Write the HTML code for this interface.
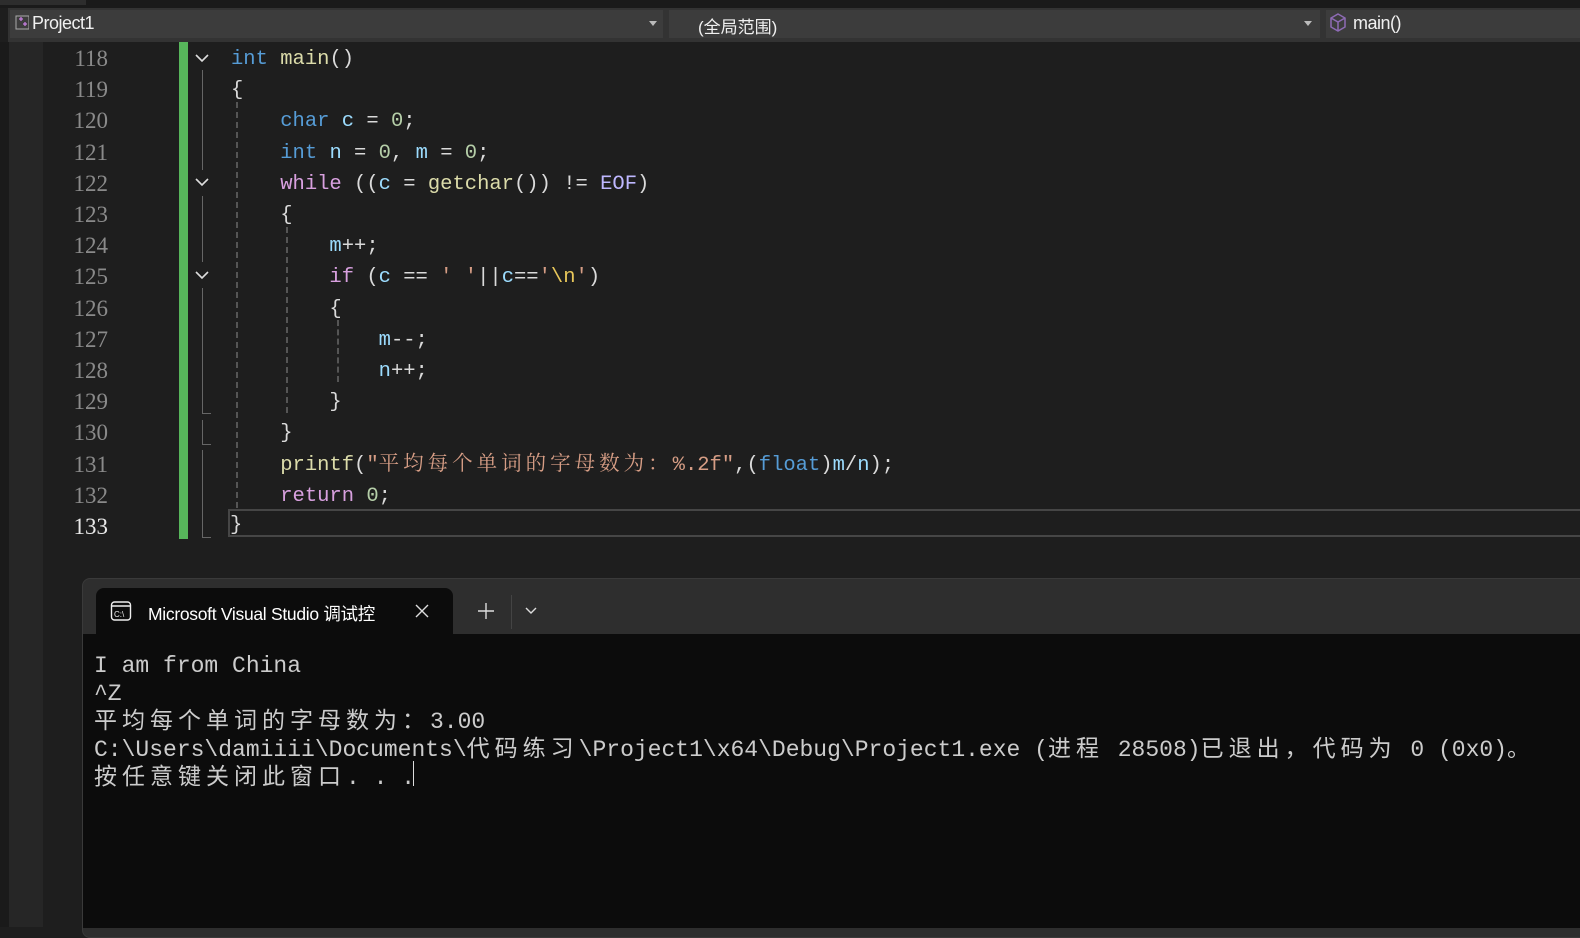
<!DOCTYPE html>
<html><head><meta charset="utf-8"><style>
*{margin:0;padding:0;box-sizing:border-box}
body{width:1580px;height:927px;background:#1e1e1e;position:relative;overflow:hidden;font-family:"Liberation Sans","Noto Sans CJK SC",sans-serif}
.abs{position:absolute}
.code{position:absolute;left:0;top:2px;font-family:"Liberation Mono","Noto Serif CJK SC",monospace;font-size:20.5px;white-space:pre;color:#dadada}
.ln{position:absolute;left:44px;width:64px;text-align:right;font-family:"Liberation Serif","Noto Serif CJK SC",serif;font-size:23px;color:#8a8a8a;height:31.2px;line-height:31.2px}
.row{position:absolute;left:231px;height:31.2px;line-height:31.2px}
.kw{color:#569cd6}.fn{color:#dcdcaa}.vr{color:#9cdcfe}.nm{color:#b5cea8}.ct{color:#d8a0df}.st{color:#d69d85}.es{color:#e8c75a}
.cj{letter-spacing:4px}
.term{font-family:"Liberation Mono","Noto Sans CJK SC",monospace;font-size:23px;color:#cccccc;white-space:pre;line-height:28px}
.tc{letter-spacing:5px}
.chev{position:absolute;left:194px;width:16px;height:16px}
.dash{position:absolute;width:0;border-left:2px dashed #555}
</style></head><body>
<div class="abs" style="left:0;top:0;width:1580px;height:8px;background:#1a1a1a"></div>
<div class="abs" style="left:0;top:0;width:86px;height:5px;background:#2d2d2d"></div>
<div class="abs" style="left:8px;top:8px;width:1572px;height:34px;background:#333"></div>
<div class="abs" style="left:10px;top:10px;width:653px;height:28px;background:#3c3c3c"></div>
<div class="abs" style="left:669px;top:10px;width:651px;height:28px;background:#3c3c3c"></div>
<div class="abs" style="left:1326px;top:10px;width:254px;height:28px;background:#3c3c3c"></div>
<svg class="abs" style="left:15px;top:13px" width="14" height="20"><rect x="1" y="3" width="13" height="13" fill="none" stroke="#aaa"/><path d="M4 6h4M6 4v4M8 11h4M10 9v4" stroke="#c57ee0" stroke-width="1.3"/></svg>
<div class="abs" style="left:32px;top:13px;font-size:18px;color:#f0f0f0;letter-spacing:-0.5px">Project1</div>
<div class="abs" style="left:649px;top:21px;border:4px solid transparent;border-top:5px solid #bbb"></div>
<div class="abs" style="left:698px;top:13px;font-size:17px;color:#f0f0f0">(全局范围)</div>
<div class="abs" style="left:1304px;top:21px;border:4px solid transparent;border-top:5px solid #bbb"></div>
<svg class="abs" style="left:1329px;top:12px" width="20" height="24"><path d="M9 2l7 4v9l-7 4-7-4V6z M2 6l7 4 7-4 M9 10v9" fill="none" stroke="#8e6bb5" stroke-width="1.5"/></svg>
<div class="abs" style="left:1353px;top:13px;font-size:18px;color:#f0f0f0;letter-spacing:-0.5px">main()</div>
<div class="abs" style="left:0;top:42px;width:9px;height:885px;background:#1a1a1a"></div>
<div class="abs" style="left:9px;top:42px;width:34px;height:885px;background:#262626"></div>
<div class="abs" style="left:179px;top:42px;width:9px;height:497px;background:#57b65b"></div>
<div class="abs" style="left:202px;top:70px;width:1px;height:100px;background:#666"></div>
<div class="abs" style="left:202px;top:196px;width:1px;height:66px;background:#666"></div>
<div class="abs" style="left:202px;top:288px;width:1px;height:126px;background:#666"></div>
<div class="abs" style="left:202px;top:413px;width:9px;height:1px;background:#666"></div>
<div class="abs" style="left:202px;top:420px;width:1px;height:24px;background:#666"></div>
<div class="abs" style="left:202px;top:444px;width:9px;height:1px;background:#666"></div>
<div class="abs" style="left:202px;top:450px;width:1px;height:87px;background:#666"></div>
<div class="abs" style="left:202px;top:537px;width:9px;height:1px;background:#666"></div>
<svg class="chev" style="top:50px" viewBox="0 0 16 16"><path d="M2 5l6 6 6-6" fill="none" stroke="#ddd" stroke-width="1.6"/></svg>
<svg class="chev" style="top:174px" viewBox="0 0 16 16"><path d="M2 5l6 6 6-6" fill="none" stroke="#ddd" stroke-width="1.6"/></svg>
<svg class="chev" style="top:267px" viewBox="0 0 16 16"><path d="M2 5l6 6 6-6" fill="none" stroke="#ddd" stroke-width="1.6"/></svg>
<div class="dash" style="left:236px;top:102px;height:406px"></div>
<div class="dash" style="left:286px;top:227px;height:186px"></div>
<div class="dash" style="left:337px;top:320px;height:62px"></div>
<div class="abs" style="left:228px;top:509px;width:1352px;height:28px;border:2px solid #464646;border-right:none"></div>
<div class="ln" style="top:43px">118</div><div class="ln" style="top:74.2px">119</div><div class="ln" style="top:105.4px">120</div><div class="ln" style="top:136.6px">121</div><div class="ln" style="top:167.8px">122</div><div class="ln" style="top:199px">123</div><div class="ln" style="top:230.2px">124</div><div class="ln" style="top:261.4px">125</div><div class="ln" style="top:292.6px">126</div><div class="ln" style="top:323.8px">127</div><div class="ln" style="top:355px">128</div><div class="ln" style="top:386.2px">129</div><div class="ln" style="top:417.4px">130</div><div class="ln" style="top:448.6px">131</div><div class="ln" style="top:479.8px">132</div><div class="ln" style="top:511px;color:#e8e8e8">133</div>
<div class="code">
<div class="row" style="top:42px"><span class="kw">int</span> <span class="fn">main</span>()</div>
<div class="row" style="top:73.2px">{</div>
<div class="row" style="top:104.4px">    <span class="kw">char</span> <span class="vr">c</span> = <span class="nm">0</span>;</div>
<div class="row" style="top:135.6px">    <span class="kw">int</span> <span class="vr">n</span> = <span class="nm">0</span>, <span class="vr">m</span> = <span class="nm">0</span>;</div>
<div class="row" style="top:166.8px">    <span class="ct">while</span> ((<span class="vr">c</span> = <span class="fn">getchar</span>()) != <span style="color:#beb7ff">EOF</span>)</div>
<div class="row" style="top:198px">    {</div>
<div class="row" style="top:229.2px">        <span class="vr">m</span>++;</div>
<div class="row" style="top:260.4px">        <span class="ct">if</span> (<span class="vr">c</span> == <span class="st">' '</span>||<span class="vr">c</span>==<span class="st">'<span class="es">\n</span>'</span>)</div>
<div class="row" style="top:291.6px">        {</div>
<div class="row" style="top:322.8px">            <span class="vr">m</span>--;</div>
<div class="row" style="top:354px">            <span class="vr">n</span>++;</div>
<div class="row" style="top:385.2px">        }</div>
<div class="row" style="top:416.4px">    }</div>
<div class="row" style="top:447.6px">    <span class="fn">printf</span>(<span class="st">"<span class="cj">平均每个单词的字母数为：</span>%.2f"</span>,(<span class="kw">float</span>)<span class="vr">m</span>/<span class="vr">n</span>);</div>
<div class="row" style="top:478.8px">    <span class="ct">return</span> <span class="nm">0</span>;</div>
<div class="row" style="top:508px;left:230px">}</div>
</div>
<div class="abs" style="left:82px;top:578px;width:1510px;height:360px;background:#2e2e2e;border:1px solid #3a3a3a;border-radius:8px"></div>
<div class="abs" style="left:83px;top:634px;width:1497px;height:294px;background:#0c0c0c"></div>
<div class="abs" style="left:96px;top:588px;width:357px;height:50px;background:#0c0c0c;border-radius:8px 8px 0 0"></div>
<svg class="abs" style="left:110px;top:600px" width="22" height="22"><rect x="1.5" y="2" width="19" height="18" rx="3" fill="none" stroke="#eee" stroke-width="1.4"/><line x1="2" y1="6" x2="20" y2="6" stroke="#eee" stroke-width="1.4"/><text x="4" y="17" font-size="8" fill="#eee" font-family="Liberation Sans">C:\</text></svg>
<div class="abs" style="left:148px;top:601px;font-size:17.5px;color:#fff;white-space:nowrap;letter-spacing:-0.3px">Microsoft Visual Studio 调试控</div>
<svg class="abs" style="left:414px;top:603px" width="16" height="16"><path d="M2 2l12 12M14 2L2 14" stroke="#ddd" stroke-width="1.4"/></svg>
<svg class="abs" style="left:477px;top:602px" width="18" height="18"><path d="M9 1v16M1 9h16" stroke="#ddd" stroke-width="1.4"/></svg>
<div class="abs" style="left:511px;top:595px;width:1px;height:34px;background:#444"></div>
<svg class="abs" style="left:524px;top:605px" width="14" height="12"><path d="M2 3l5 5 5-5" fill="none" stroke="#ddd" stroke-width="1.4"/></svg>
<div class="abs term" style="left:94px;top:652px">I am from China
^Z
<span class="tc">平均每个单词的字母数为：</span>3.00
C:\Users\damiiii\Documents\<span class="tc">代码练习</span>\Project1\x64\Debug\Project1.exe (<span class="tc">进程</span> 28508)<span class="tc">已退出，代码为</span> 0 (0x0)<span class="tc">。</span>
<span class="tc">按任意键关闭此窗口</span>. . .</div>
<div class="abs" style="left:413px;top:761px;width:1px;height:25px;background:#ddd"></div>
</body></html>
